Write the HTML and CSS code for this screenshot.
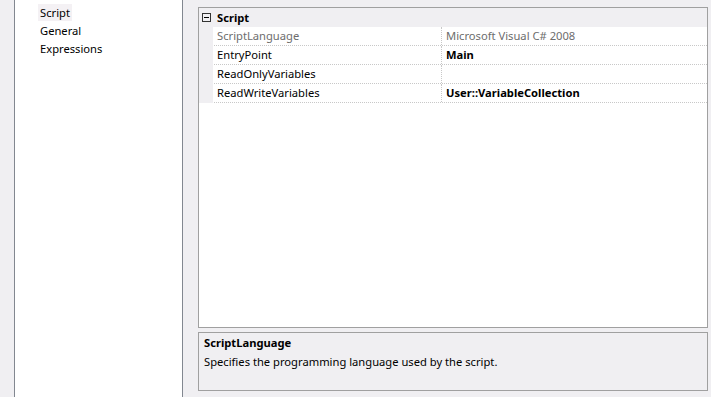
FILE: index.html
```html
<!DOCTYPE html>
<html>
<head>
<meta charset="utf-8">
<link rel="stylesheet" href="styles.css">
</head>
<body>
<div class="page">
  <div class="nav">
    <div class="nav-item"><span class="sel">Script</span></div>
    <div class="nav-item"><span>General</span></div>
    <div class="nav-item"><span>Expressions</span></div>
  </div>
  <div class="main">
    <div class="grid">
      <div class="cat">
        <span class="toggle"><span class="minus"></span></span>
        <span class="cat-label">Script</span>
      </div>
      <div class="row">
        <div class="margin"></div>
        <div class="name dim">ScriptLanguage</div>
        <div class="value dim">Microsoft Visual C# 2008</div>
      </div>
      <div class="row">
        <div class="margin"></div>
        <div class="name">EntryPoint</div>
        <div class="value bold">Main</div>
      </div>
      <div class="row">
        <div class="margin"></div>
        <div class="name">ReadOnlyVariables</div>
        <div class="value"></div>
      </div>
      <div class="row">
        <div class="margin"></div>
        <div class="name">ReadWriteVariables</div>
        <div class="value bold">User::VariableCollection</div>
      </div>
    </div>
    <div class="desc">
      <div class="desc-title">ScriptLanguage</div>
      <div class="desc-text">Specifies the programming language used by the script.</div>
    </div>
  </div>
</div>
</body>
</html>
```

FILE: styles.css
```css
html, body {
  margin: 0;
  padding: 0;
}
body {
  background: #f0eff2;
  font-family: "Noto Sans", "Open Sans", sans-serif;
  font-size: 11.2px;
  color: #000;
  width: 711px;
  height: 397px;
  overflow: hidden;
}
.page {
  display: flex;
  height: 397px;
}
.nav {
  margin-left: 14px;
  width: 167px;
  height: 397px;
  background: #fff;
  border-left: 1px solid #828790;
  border-right: 1px solid #828790;
  padding-top: 4px;
  box-sizing: content-box;
}
.nav-item {
  height: 18px;
  line-height: 18px;
  padding-left: 23px;
}
.nav-item span {
  padding: 1px 2px;
}
.nav-item .sel {
  background: #f4f1f4;
}
.main {
  margin-left: 15px;
  margin-top: 7px;
  display: flex;
  flex-direction: column;
  width: 510px;
}
.grid {
  height: 319px;
  border: 1px solid #a0a0a0;
  background: #fff;
}
.cat {
  height: 19px;
  background: #f0eff2;
  display: flex;
  align-items: center;
}
.toggle {
  width: 7px;
  height: 7px;
  border: 1px solid #333;
  margin-left: 3px;
  position: relative;
}
.minus {
  position: absolute;
  left: 1px;
  top: 3px;
  width: 5px;
  height: 1px;
  background: #000;
}
.cat-label {
  font-weight: bold;
  margin-left: 6px;
}
.row {
  display: flex;
  height: 18px;
  line-height: 18px;
  border-bottom: 1px dotted #c8c8c8;
}
.row .margin {
  width: 14px;
  background: #f0eff2;
  flex: none;
  margin-bottom: -1px;
}
.name {
  width: 224px;
  padding-left: 4px;
  border-right: 1px dotted #c8c8c8;
  flex: none;
}
.value {
  padding-left: 4px;
  flex: 1;
}
.dim {
  color: #6d6d6d;
}
.bold {
  font-weight: bold;
}
.desc {
  margin-top: 4px;
  height: 57px;
  border: 1px solid #a0a0a0;
  padding-left: 5px;
}
.desc-title {
  font-weight: bold;
  line-height: 18px;
  margin-top: 1px;
}
.desc-text {
  line-height: 18px;
  margin-top: 1px;
}
```
